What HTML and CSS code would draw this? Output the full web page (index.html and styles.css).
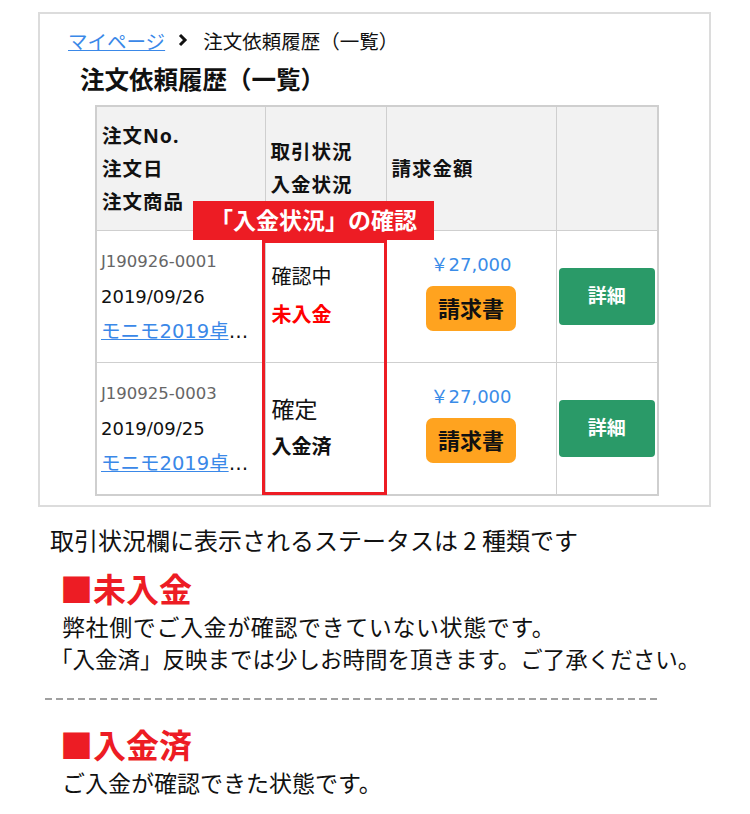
FILE: index.html
```html
<!DOCTYPE html>
<html lang="ja">
<head>
    <meta charset="UTF-8">
    <meta name="viewport" content="width=device-width, initial-scale=1.0">
    <title>注文依頼履歴（一覧）</title>
    <link rel="stylesheet" href="styles.css">
</head>
<body>
    <div class="panel">
        <nav class="crumbs">
            <a href="#">マイページ</a>
            <svg class="chev" width="10" height="14" viewBox="0 0 10 14"><polyline points="2,2 7,7 2,12" fill="none" stroke="#111" stroke-width="3"/></svg>
            <span>注文依頼履歴（一覧）</span>
        </nav>
        <h1 class="title">注文依頼履歴（一覧）</h1>

        <div class="table-wrap">
            <table class="orders">
                <colgroup>
                    <col class="c1"><col class="c2"><col class="c3"><col class="c4">
                </colgroup>
                <thead>
                    <tr class="head">
                        <th>注文No.<br>注文日<br>注文商品</th>
                        <th>取引状況<br>入金状況</th>
                        <th>請求金額</th>
                        <th></th>
                    </tr>
                </thead>
                <tbody>
                    <tr>
                        <td class="info">
                            <div class="no">J190926-0001</div>
                            <div class="date">2019/09/26</div>
                            <div class="item"><a href="#">モニモ2019卓上カレンダー</a></div>
                        </td>
                        <td class="status">
                            <div>確認中</div>
                            <div class="unpaid">未入金</div>
                        </td>
                        <td class="amount">
                            <div class="price">￥27,000</div>
                            <a href="#" class="btn-invoice">請求書</a>
                        </td>
                        <td class="action"><a href="#" class="btn-detail">詳細</a></td>
                    </tr>
                    <tr>
                        <td class="info">
                            <div class="no">J190925-0003</div>
                            <div class="date">2019/09/25</div>
                            <div class="item"><a href="#">モニモ2019卓上カレンダー</a></div>
                        </td>
                        <td class="status">
                            <div class="big">確定</div>
                            <div class="paid">入金済</div>
                        </td>
                        <td class="amount">
                            <div class="price">￥27,000</div>
                            <a href="#" class="btn-invoice">請求書</a>
                        </td>
                        <td class="action"><a href="#" class="btn-detail">詳細</a></td>
                    </tr>
                </tbody>
            </table>
            <div class="callout">「入金状況」の確認</div>
            <div class="frame"></div>
        </div>
    </div>

    <div class="notes">
        <p class="lead">取引状況欄に表示されるステータスは 2 種類です</p>

        <h2 class="status-title">■未入金</h2>
        <p class="desc spaced">弊社側でご入金が確認できていない状態です。</p>
        <p class="desc wide">「入金済」反映までは少しお時間を頂きます。ご了承ください。</p>

        <div class="dashed"></div>

        <h2 class="status-title second">■入金済</h2>
        <p class="desc">ご入金が確認できた状態です。</p>
    </div>
</body>
</html>
```

FILE: styles.css
```css
* {
    margin: 0;
    padding: 0;
    box-sizing: border-box;
}

body {
    font-family: 'Noto Sans', 'Noto Sans CJK JP', sans-serif;
    background: #fff;
    color: #111;
    width: 750px;
}

a {
    color: #3a88e8;
}

.panel {
    margin: 12px 0 0 38px;
    width: 673px;
    height: 495px;
    border: 2px solid #dcdcdc;
    padding: 13px 0 0 28px;
    overflow: hidden;
}

.crumbs {
    display: flex;
    align-items: center;
    height: 26px;
    font-size: 19.5px;
}

.crumbs a {
    font-size: 19.5px;
}

.crumbs .chev {
    margin: 0 15px 0 13px;
}

.title {
    font-size: 24.5px;
    font-weight: 700;
    line-height: 30px;
    margin: 12px 0 0 12px;
}

.table-wrap {
    position: relative;
    margin: 10px 0 0 27px;
    width: 562px;
}

.orders {
    width: 562px;
    border-collapse: collapse;
    border: 2px solid #cfcfcf;
    table-layout: fixed;
}

.orders .c1 { width: 169px; }
.orders .c2 { width: 121px; }
.orders .c3 { width: 170px; }
.orders .c4 { width: 102px; }

.orders th,
.orders td {
    border: 1px solid #cfcfcf;
    vertical-align: middle;
}

.head {
    height: 124px;
    background: #f2f2f2;
}

.head th {
    text-align: left;
    font-size: 19.5px;
    font-weight: 700;
    line-height: 33px;
    letter-spacing: 1px;
    padding: 0 5px;
}

.orders tbody tr:first-child { height: 132px; }
.orders tbody tr:last-child { height: 133px; }

.info {
    padding: 0 5px 0 4px;
    line-height: 35px;
    font-family: 'DejaVu Sans', 'Noto Sans CJK JP', sans-serif;
}

.info .no {
    font-size: 16.5px;
    color: #666;
}

.info .date {
    font-size: 18px;
}

.info .item {
    font-size: 19.5px;
    white-space: nowrap;
    overflow: hidden;
    text-overflow: ellipsis;
}

.status {
    padding: 0 6px;
    font-size: 20px;
    line-height: 38px;
}

.status .big {
    font-size: 23px;
}

.status .unpaid {
    color: #f00;
    font-weight: 700;
}

.status .paid {
    font-weight: 700;
}

.amount {
    text-align: center;
    padding-bottom: 10px;
}

.price {
    color: #3a8ce8;
    font-family: 'DejaVu Sans', 'Noto Sans CJK JP', sans-serif;
    font-size: 18px;
    line-height: 26px;
    margin-bottom: 8px;
}

.btn-invoice {
    display: inline-block;
    width: 90px;
    height: 45px;
    line-height: 45px;
    background: #ffa31f;
    color: #111;
    font-size: 22px;
    font-weight: 700;
    text-decoration: none;
    border-radius: 7px;
}

.action {
    padding: 0 2px 0 2px;
}

.btn-detail {
    display: block;
    height: 57px;
    line-height: 57px;
    background: #2a9a68;
    color: #fff;
    text-align: center;
    font-size: 19px;
    font-weight: 700;
    text-decoration: none;
    border-radius: 4px;
}

.callout {
    position: absolute;
    left: 98px;
    top: 96px;
    width: 241px;
    height: 39px;
    line-height: 39px;
    background: #ed1c24;
    color: #fff;
    font-size: 23px;
    font-weight: 700;
    text-align: center;
}

.frame {
    position: absolute;
    left: 167px;
    top: 135px;
    width: 125px;
    height: 255px;
    border: 3px solid #ed1c24;
}

.notes {
    padding: 17px 0 0 50px;
    font-family: 'Noto Sans CJK JP', sans-serif;
}

.lead {
    font-size: 24px;
    line-height: 32px;
}

.status-title {
    color: #ed1c24;
    font-size: 33px;
    font-weight: 700;
    line-height: 40px;
    margin: 12px 0 2px 10px;
}

.status-title.second {
    margin-top: 24px;
}

.desc {
    font-size: 23px;
    line-height: 32px;
    margin-left: 12px;
}

.desc.spaced {
    letter-spacing: 0.6px;
}

.desc.wide {
    margin-left: 0;
    font-size: 22.5px;
}

.dashed {
    width: 615px;
    height: 2px;
    margin: 24px 0 0 -5px;
    background: repeating-linear-gradient(to right, #a0a0a0 0 7px, transparent 7px 11px);
}
```
